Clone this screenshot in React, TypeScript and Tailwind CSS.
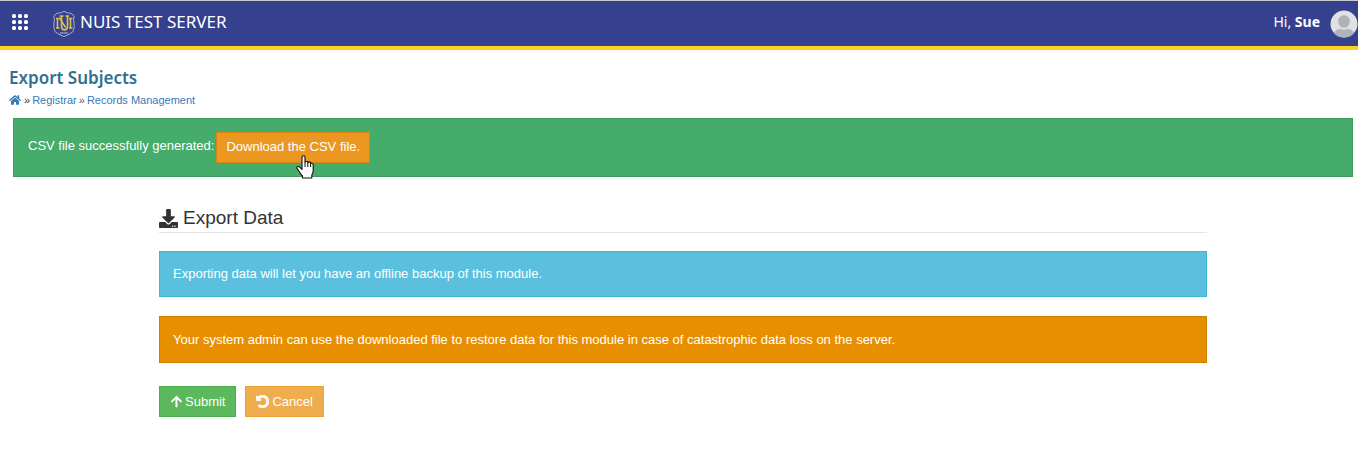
import type { ReactNode } from "react";
import { FaArrowUp, FaDownload, FaHome, FaUndoAlt } from "react-icons/fa";

function GridIcon() {
  return (
    <svg viewBox="0 0 16 16" className="size-4" fill="#fff" aria-hidden="true">
      {[0, 6, 12].map((y) =>
        [0, 6, 12].map((x) => <rect key={`${x}-${y}`} x={x} y={y} width="4" height="4" rx="1.6" />),
      )}
    </svg>
  );
}

function Crest() {
  return (
    <svg viewBox="0 0 24 28" className="h-7 w-6" fill="none" aria-hidden="true">
      <path
        d="M5 3.3 Q9 3.5 12 1.2 Q15 3.5 19 3.3 L22.3 6 Q21 9 22 13 Q22.8 18 21 21.5 Q18 24.5 12 26.5 Q6 24.5 3 21.5 Q1.2 18 2 13 Q3 9 1.7 6 Z"
        stroke="#a9b0d6"
        strokeWidth="1"
      />
      <path d="M4 8.5 H8 L13.5 17.5 M5.5 8.5 V18 M4 18 H7.500" stroke="#d8c14c" strokeWidth="1.6" />
      <path d="M7.500 6 H11.500 M9.500 6 V16.500 Q9.500 19.800 12.500 19.800 Q15.500 19.800 15.500 16.500 V6 M13.500 6 H17" stroke="#d8c14c" strokeWidth="1.7" />
      <path d="M18.500 8.500 V18 M17 8.500 H20.500 M17 18 H20.500" stroke="#d8c14c" strokeWidth="1.6" />
      <path d="M8 23 H16" stroke="#a9b0d6" strokeWidth="1.5" strokeDasharray="1.5 .6" />
    </svg>
  );
}

function Avatar() {
  return (
    <svg viewBox="0 0 28 28" className="size-7" role="img" aria-label="Sue">
      <defs>
        <clipPath id="avatar">
          <circle cx="14" cy="14" r="13.5" />
        </clipPath>
      </defs>
      <circle cx="14" cy="14" r="13.5" fill="#dfe1e2" />
      <g clipPath="url(#avatar)" fill="#adb3b7">
        <ellipse cx="14" cy="11.5" rx="5.8" ry="6.3" />
        <path d="M4 28 V22.5 Q6 19.5 10 18.8 Q14 20.8 18 18.8 Q22 19.5 24 22.5 V28 Z" />
      </g>
    </svg>
  );
}

function HandPointer() {
  return (
    <svg viewBox="0 0 18 24" className="pointer-events-none absolute top-[23px] left-[80px] h-6 w-[18px]" aria-hidden="true">
      <path
        d="M6 14.5 V2.5 Q6 .8 7.5 .8 Q9 .8 9 2.5 V7.5 Q9 6.3 10.3 6.3 Q11.7 6.3 11.8 7.8 Q12 6.8 13.2 6.9 Q14.5 7 14.6 8.5 Q14.9 7.9 15.9 8.2 Q17.2 8.5 17.2 10 V15.5 Q17.2 18 15.8 20 V23 H6.5 V21 Q4.5 19 3.2 16.5 L1 13.4 Q.5 12 1.7 11.5 Q2.9 11.2 4 12.3 Z"
        fill="#fff"
        stroke="#111"
        strokeWidth="1.1"
        strokeLinejoin="round"
      />
      <path d="M9 7.5 V12 M11.8 8 V12 M14.6 8.5 V12" stroke="#111" strokeWidth="1" />
    </svg>
  );
}

function Notice({ className, children }: { className: string; children: ReactNode }) {
  return <div className={`border px-[13px] leading-5 text-white ${className}`}>{children}</div>;
}

export default function App() {
  return (
    <div className="bg-white font-['Liberation_Sans',Arial,sans-serif] text-[13px] text-[#333]">
      <header className="flex h-[50px] items-center border-t border-b-4 border-t-[#c8c9cb] border-b-[#ffd11b] bg-[#35408f] pl-3 font-['Noto_Sans',sans-serif] text-white">
        <button type="button" aria-label="Open modules" className="mb-1">
          <GridIcon />
        </button>
        <a href="#" className="ml-6 flex items-center gap-1 text-[17px]">
          <Crest />
          <span className="mb-1">NUIS TEST SERVER</span>
        </a>
        <a href="#" className="ml-auto flex items-center gap-[10px] text-[14px]">
          <span className="mb-1">
            Hi, <b>Sue</b>
          </span>
          <Avatar />
        </a>
      </header>

      <div className="px-[9px] pt-4">
        <h1 className="font-['Noto_Sans',sans-serif] text-[17px] leading-6 font-semibold text-[#31708f]">Export Subjects</h1>
        <nav aria-label="Breadcrumb" className="flex items-center gap-0.5 pt-0.5 text-[11px] leading-4">
          <a href="#" aria-label="Home" className="pr-px text-[#337ab7]">
            <FaHome className="size-3" />
          </a>
          <span>»</span>
          <a href="#" className="text-[#337ab7]">Registrar</a>
          <span className="text-[#8a4b20]">»</span>
          <a href="#" className="text-[#337ab7]">Records Management</a>
        </nav>
      </div>

      <main className="pt-[10px] pr-[5px] pl-[13px]">
        <div role="status" className="flex items-center gap-0.5 border border-[#3d9a5f] bg-[#45ac6b] px-[14px] py-[13px] text-white">
          <span className="pb-1">CSV file successfully generated:</span>
          <div className="relative">
            <a href="#" className="block border border-[#d58512] bg-[#ec971f] px-[9px] pt-[3px] pb-[5px] leading-[21px]">
              Download the CSV file.
            </a>
            <HandPointer />
          </div>
        </div>

        <section className="mx-[146px] pt-7">
          <h2 className="flex items-center gap-[5px] border-b border-[#e5e5e5] pb-px text-[19px] leading-[26px]">
            <FaDownload className="size-[19px]" />
            Export Data
          </h2>
          <Notice className="mt-[18px] border-[#3db5d8] bg-[#5bc0de] py-3">
            Exporting data will let you have an offline backup of this module.
          </Notice>
          <Notice className="mt-[19px] border-[#cc7f00] bg-[#e88f00] pt-[13px] pb-3">
            Your system admin can use the downloaded file to restore data for this module in case of catastrophic data loss on the server.
          </Notice>
          <div className="mt-[23px] flex gap-[9px] text-white">
            <button type="submit" className="flex items-center gap-0.5 border border-[#4cae4c] bg-[#5cb85c] px-[10px] leading-[29px]">
              <FaArrowUp className="size-[13px]" />
              Submit
            </button>
            <button type="button" className="flex items-center gap-[3px] border border-[#eea236] bg-[#f0ad4e] px-[10px] leading-[29px]">
              <FaUndoAlt className="size-[13px]" stroke="currentColor" strokeWidth={36} />
              Cancel
            </button>
          </div>
        </section>
      </main>
    </div>
  );
}
